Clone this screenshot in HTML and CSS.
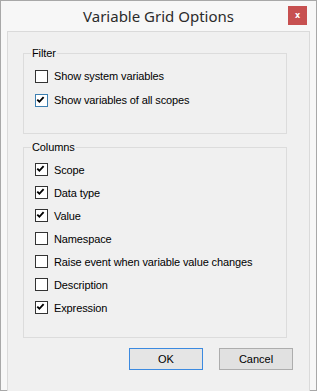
FILE: index.html
```html
<!DOCTYPE html>
<html lang="en">

<head>
    <meta charset="UTF-8">
    <meta name="viewport" content="width=device-width, initial-scale=1.0">
    <title>Variable Grid Options</title>
    <link rel="stylesheet" href="styles.css">
</head>

<body>

    <div class="window">

        <div class="titlebar">
            <span class="title">Variable Grid Options</span>
            <span class="close">x</span>
        </div>

        <div class="content">

            <fieldset class="group filter">
                <legend>Filter</legend>
                <div class="row">
                    <span class="box"></span>
                    <span class="label">Show system variables</span>
                </div>
                <div class="row">
                    <span class="box focus"><svg viewBox="0 0 13 13"><path d="M2.5 6.5 L5 9 L10 3.5"/></svg></span>
                    <span class="label">Show variables of all scopes</span>
                </div>
            </fieldset>

            <fieldset class="group columns">
                <legend>Columns</legend>
                <div class="row">
                    <span class="box"><svg viewBox="0 0 13 13"><path d="M2.5 6.5 L5 9 L10 3.5"/></svg></span>
                    <span class="label">Scope</span>
                </div>
                <div class="row">
                    <span class="box"><svg viewBox="0 0 13 13"><path d="M2.5 6.5 L5 9 L10 3.5"/></svg></span>
                    <span class="label">Data type</span>
                </div>
                <div class="row">
                    <span class="box"><svg viewBox="0 0 13 13"><path d="M2.5 6.5 L5 9 L10 3.5"/></svg></span>
                    <span class="label">Value</span>
                </div>
                <div class="row">
                    <span class="box"></span>
                    <span class="label">Namespace</span>
                </div>
                <div class="row">
                    <span class="box"></span>
                    <span class="label">Raise event when variable value changes</span>
                </div>
                <div class="row">
                    <span class="box"></span>
                    <span class="label">Description</span>
                </div>
                <div class="row">
                    <span class="box"><svg viewBox="0 0 13 13"><path d="M2.5 6.5 L5 9 L10 3.5"/></svg></span>
                    <span class="label">Expression</span>
                </div>
            </fieldset>

            <div class="buttons">
                <button class="btn default">OK</button>
                <button class="btn">Cancel</button>
            </div>

        </div>
    </div>

</body>

</html>
```

FILE: styles.css
```css
body {
    margin: 0;
    background: #ffffff;
    font-family: "Liberation Sans", Arial, sans-serif;
    font-size: 11px;
    letter-spacing: -0.12px;
    color: #000000;
}

.window {
    width: 317px;
    height: 391px;
    box-sizing: border-box;
    border: 1px solid #a8a8a8;
    background: #f7f7f7;
}

/* title bar */
.titlebar {
    height: 30px;
    display: flex;
    align-items: center;
    justify-content: center;
    position: relative;
}

.title {
    font-family: "Noto Sans", sans-serif;
    font-size: 15px;
    letter-spacing: 0;
    color: #2b2b2b;
    margin-top: -1px;
}

.close {
    position: absolute;
    top: 5px;
    right: 9px;
    width: 19px;
    height: 19px;
    background: #c75050;
    color: #ffffff;
    font-family: "DejaVu Sans", sans-serif;
    font-weight: bold;
    font-size: 8px;
    line-height: 8px;
    display: flex;
    align-items: center;
    justify-content: center;
}

.content {
    margin: 0 6px 0 6px;
    border: 1px solid #dadada;
    background: #f0f0f0;
    height: 351px;
    padding-top: 15px;
    box-sizing: content-box;
}

/* group boxes */
.group {
    margin: 0 22px 0 15px;
    padding: 0 0 0 7px;
    border: 1px solid #dcdcdc;
    min-width: 0;
}

.group legend {
    padding: 0 1px;
    line-height: 13px;
}

.filter {
    padding-top: 4px;
    padding-bottom: 21px;
}

.columns {
    margin-top: 7px;
    padding-top: 4px;
    padding-bottom: 18px;
}

.row {
    display: flex;
    align-items: center;
    height: 24px;
    margin-left: 4px;
}

.columns .row {
    height: 23px;
}

.box {
    width: 13px;
    height: 13px;
    box-sizing: border-box;
    border: 1px solid #333333;
    background: #ffffff;
    display: flex;
}

.box.focus {
    border-color: #3c7fb1;
}

.box svg {
    width: 11px;
    height: 11px;
}

.box path {
    fill: none;
    stroke: #000000;
    stroke-width: 2.2;
    transform: translate(-1px, -1px);
}

.label {
    margin-left: 6px;
}

/* dialog buttons */
.buttons {
    display: flex;
    justify-content: flex-end;
    gap: 16px;
    margin-top: 10px;
    padding-right: 16px;
}

.btn {
    width: 74px;
    height: 22px;
    font-family: "Liberation Sans", Arial, sans-serif;
    font-size: 11px;
    color: #000000;
    background: #e1e1e1;
    border: 1px solid #adadad;
    padding: 0;
    margin: 0;
}

.btn.default {
    border-color: #3c8ae0;
    background: #e5e5e5;
}
```
